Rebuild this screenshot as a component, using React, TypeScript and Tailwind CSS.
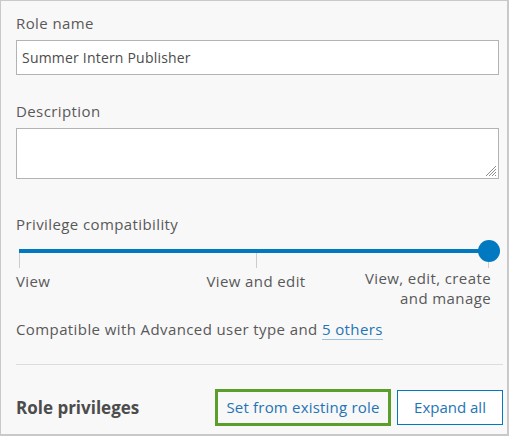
import React from "react";

export default function App() {
  const font = { fontFamily: "'Open Sans', 'Noto Sans', sans-serif" };
  return (
    <div
      style={font}
      className="w-[509px] h-[436px] bg-[#f8f8f8] border border-[#c9c9c9] border-r-2 border-b-2 box-border flex flex-col px-[15px] text-[#595959] overflow-hidden"
    >
      <div className="pt-[12px] text-[15px] leading-[20px] tracking-[0.4px]">Role name</div>
      <div className="mt-[7px] h-[35px] w-[483px] bg-white border border-[#b3b3b3] flex items-center px-[5px] text-[14px] tracking-[0.2px] text-[#4c4c4c]">
        Summer Intern Publisher
      </div>

      <div className="mt-[26px] text-[15px] leading-[20px] tracking-[0.4px]">Description</div>
      <div className="mt-[7px] h-[51px] w-[483px] bg-white border border-[#b3b3b3] relative">
        <svg className="absolute right-[1px] bottom-[1px]" width="14" height="14" viewBox="0 0 14 14">
          <path d="M13 3 L3 13 M13 6 L6 13 M13 9 L9 13 M13 12 L12 13" stroke="#8a8a8a" strokeWidth="1" />
        </svg>
      </div>

      <div className="mt-[35px] text-[15px] leading-[20px] tracking-[0.4px]">Privilege compatibility</div>

      <div className="relative mt-[4px] h-[70px] w-[483px] text-[15px] leading-[20px] tracking-[0.4px]">
        <div className="absolute left-[3px] top-[11px] h-[4px] w-[470px] bg-[#0079c1]" />
        <div className="absolute left-[3px] top-[15px] h-[15px] w-px bg-[#cccccc]" />
        <div className="absolute left-[240px] top-[15px] h-[15px] w-px bg-[#cccccc]" />
        <div className="absolute left-[472px] top-[15px] h-[15px] w-px bg-[#cccccc]" />
        <div className="absolute left-[462px] top-[2px] h-[22px] w-[22px] rounded-full bg-[#0079c1]" />
        <div className="absolute left-0 top-[33px]">View</div>
        <div className="absolute left-[180px] w-[120px] text-center top-[33px] whitespace-nowrap">
          View and edit
        </div>
        <div className="absolute right-[8px] top-[30px] text-right">
          View, edit, create
          <br />
          and manage
        </div>
      </div>

      <div className="mt-[11px] text-[15px] leading-[20px] tracking-[0.4px] flex">
        <span>Compatible with Advanced user type and&nbsp;</span>
        <span className="text-[#2474b5] border-b border-[#9dc2e0]">5 others</span>
      </div>

      <div className="mt-[24px] h-px w-[487px] bg-[#dcdcdc]" />

      <div className="mt-[24px] flex items-center w-[487px]">
        <div className="text-[17px] font-bold text-[#4c4c4c] flex-1">Role privileges</div>
        <div className="h-[37px] w-[176px] border-[3px] border-[#5a9f2a] flex items-center justify-center text-[15px] tracking-[0.2px] text-[#2474b5]">
          Set from existing role
        </div>
        <div className="ml-[6px] h-[35px] w-[106px] border border-[#0079c1] bg-white flex items-center justify-center text-[15px] text-[#2474b5]">
          Expand all
        </div>
      </div>
    </div>
  );
}
